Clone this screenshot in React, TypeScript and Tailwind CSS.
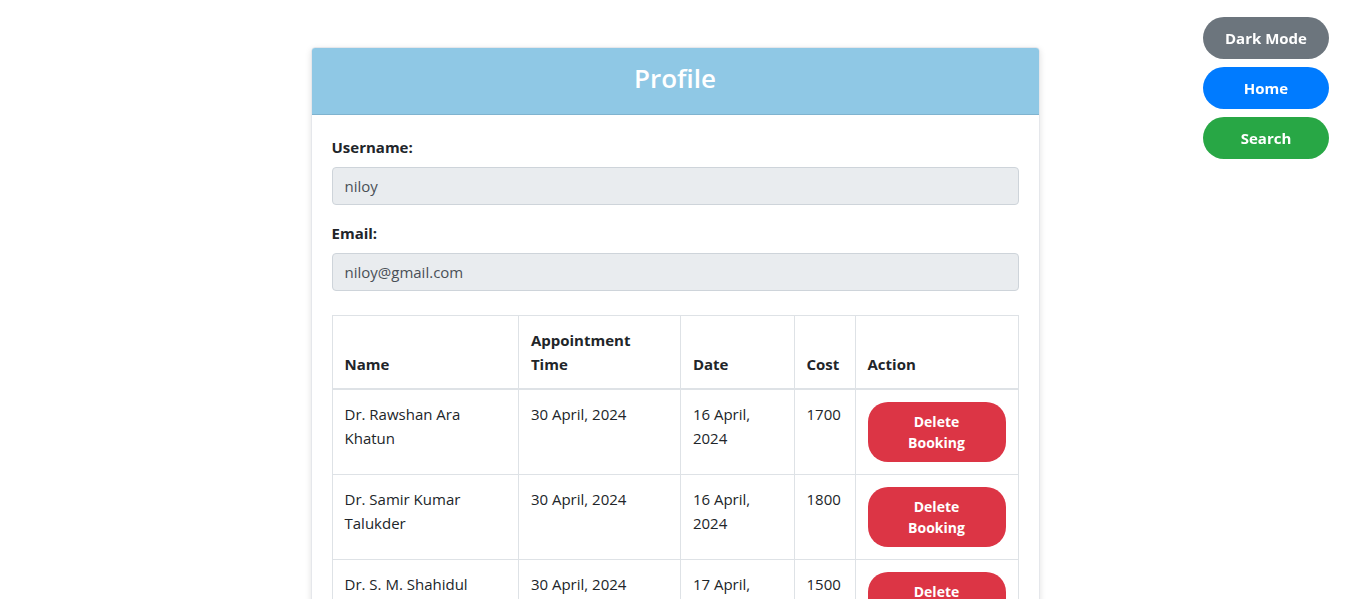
const bookings = [
  { name: 'Dr. Rawshan Ara Khatun', time: '30 April, 2024', date: '16 April, 2024', cost: '1700' },
  { name: 'Dr. Samir Kumar Talukder', time: '30 April, 2024', date: '16 April, 2024', cost: '1800' },
  { name: 'Dr. S. M. Shahidul Islam', time: '30 April, 2024', date: '17 April, 2024', cost: '1500' },
]

export default function App() {
  return (
    <div className="min-h-screen bg-white font-['Open_Sans',sans-serif] text-[16px] text-[#212529]">
      {/* floating nav buttons, top right */}
      <div className="fixed right-[18px] top-[17px] flex w-[126px] flex-col gap-2">
        <button className="h-[42px] rounded-full bg-[#6c757d] text-[15px] font-bold text-white">Dark Mode</button>
        <button className="h-[42px] rounded-full bg-[#007bff] text-[15px] font-bold text-white">Home</button>
        <button className="h-[42px] rounded-full bg-[#28a745] text-[15px] font-bold text-white">Search</button>
      </div>

      <div className="mx-auto w-[732px] pl-[3px] pt-[47px]">
        <div className="overflow-hidden rounded-[4px] border border-[#e5e7eb] shadow-[0_2px_6px_rgba(0,0,0,0.12)]">
          <div className="flex h-[67px] items-center justify-center border-b border-[#7fb3cf] bg-[#8fc8e5] pb-[7px]">
            <h2 className="text-[26px] font-semibold leading-none text-white">Profile</h2>
          </div>

          <div className="px-5 pb-5 pt-5">
            <label className="mb-2 block text-[15px] font-bold leading-[24px]">Username:</label>
            <input
              readOnly
              value="niloy"
              className="block h-[38px] w-full rounded-[4px] border border-[#ced4da] bg-[#e9ecef] px-3 text-[15px] text-[#495057] outline-none"
            />

            <label className="mb-2 mt-4 block text-[15px] font-bold leading-[24px]">Email:</label>
            <input
              readOnly
              value="niloy@gmail.com"
              className="block h-[38px] w-full rounded-[4px] border border-[#ced4da] bg-[#e9ecef] px-3 text-[15px] text-[#495057] outline-none"
            />

            <table className="mt-6 w-full border-collapse border border-[#dee2e6] text-[15px] leading-[24px]">
              <thead>
                <tr className="border-b-2 border-[#dee2e6]">
                  <th className="w-[189px] border border-[#dee2e6] p-3 text-left align-bottom font-bold">Name</th>
                  <th className="w-[163px] border border-[#dee2e6] p-3 text-left align-bottom font-bold">Appointment Time</th>
                  <th className="w-[115px] border border-[#dee2e6] p-3 text-left align-bottom font-bold">Date</th>
                  <th className="w-[61px] border border-[#dee2e6] p-3 text-left align-bottom font-bold">Cost</th>
                  <th className="border border-[#dee2e6] p-3 text-left align-bottom font-bold">Action</th>
                </tr>
              </thead>
              <tbody>
                {bookings.map((b) => (
                  <tr key={b.name}>
                    <td className="border border-[#dee2e6] p-3 align-top">{b.name}</td>
                    <td className="border border-[#dee2e6] p-3 align-top">{b.time}</td>
                    <td className="border border-[#dee2e6] p-3 align-top">{b.date}</td>
                    <td className="border border-[#dee2e6] p-3 align-top">{b.cost}</td>
                    <td className="border border-[#dee2e6] p-3 align-top">
                      <button className="h-[60px] w-[138px] rounded-[20px] bg-[#dc3545] px-6 text-[14px] font-bold leading-[21px] text-white">
                        Delete Booking
                      </button>
                    </td>
                  </tr>
                ))}
              </tbody>
            </table>
          </div>
        </div>
      </div>
    </div>
  )
}
